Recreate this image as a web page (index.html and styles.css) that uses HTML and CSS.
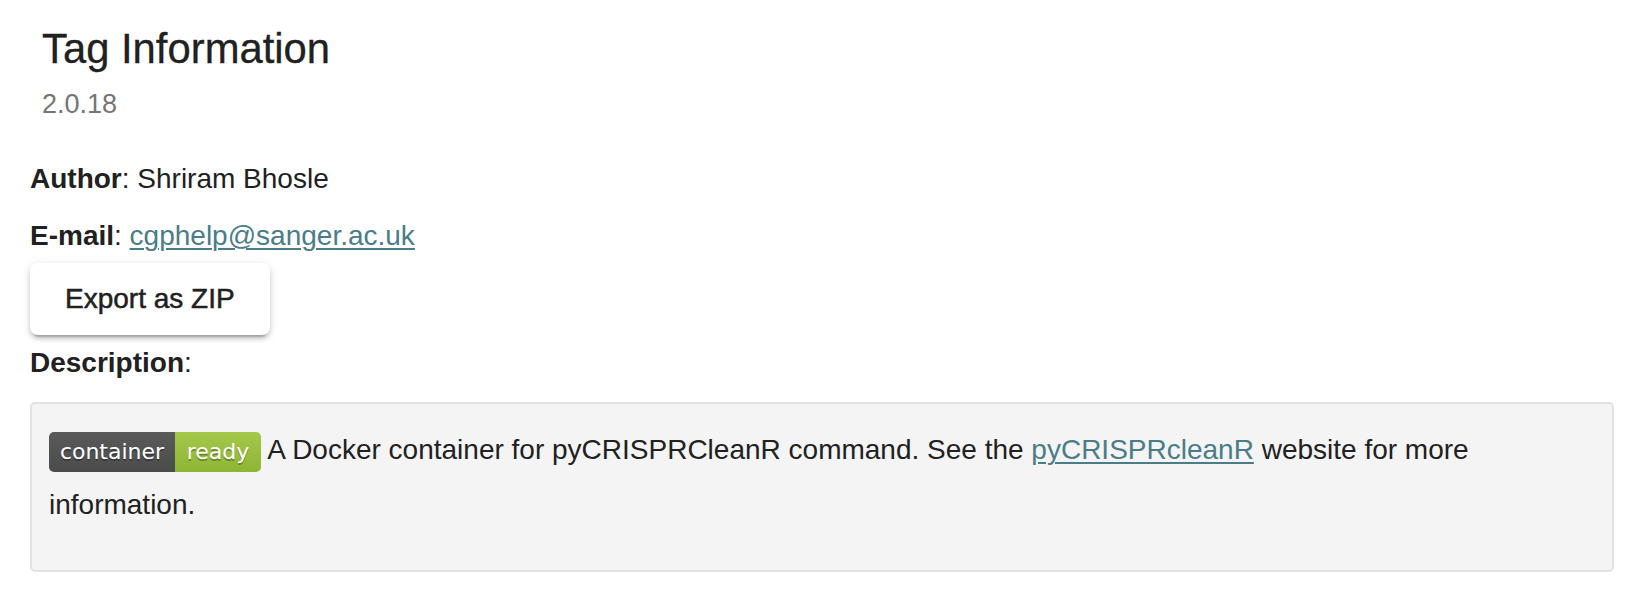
FILE: index.html
```html
<!DOCTYPE html>
<html>
<head>
<meta charset="utf-8">
<title>Tag Information</title>
<link rel="stylesheet" href="styles.css">
</head>
<body>
<div class="page">
  <div class="header">
    <h1 class="title">Tag Information</h1>
    <div class="version">2.0.18</div>
  </div>
  <p class="row row-author"><b>Author</b>: Shriram Bhosle</p>
  <p class="row row-email"><b>E-mail</b>: <a href="#" class="link">cgphelp@sanger.ac.uk</a></p>
  <button class="btn" type="button">Export as ZIP</button>
  <p class="row row-desc"><b>Description</b>:</p>
  <div class="well">
    <p class="desc"><span class="badge"><span class="badge-l">container</span><span class="badge-r">ready</span></span> A Docker container for pyCRISPRCleanR command. See the <a href="#" class="link">pyCRISPRcleanR</a> website for more information.</p>
  </div>
</div>
</body>
</html>
```

FILE: styles.css
```css
html, body {
  margin: 0;
  padding: 0;
  background: #ffffff;
}

body {
  font-family: "Liberation Sans", Arial, Helvetica, sans-serif;
  color: #212121;
}

.page {
  padding: 25px 26px 0 30px;
}

.header {
  padding-left: 12px;
}

.title {
  margin: 0;
  font-size: 41.8px;
  line-height: 48px;
  font-weight: 400;
  color: #212121;
  -webkit-text-stroke: 0.3px #212121;
}

.version {
  margin-top: 15px;
  font-size: 27px;
  line-height: 32px;
  color: #757575;
}

.row {
  margin: 0;
  font-size: 28px;
  line-height: 36px;
}

.row b {
  font-weight: 700;
}

.row-author {
  margin-top: 41px;
}

.row-email {
  margin-top: 21px;
}

.row-desc {
  margin-top: 10px;
}

.link {
  color: #4a7d87;
  text-decoration: underline;
  text-underline-offset: 3px;
  text-decoration-thickness: 2px;
}

.btn {
  display: block;
  margin-top: 9px;
  height: 72px;
  padding: 0 35px;
  border: none;
  border-radius: 8px;
  background: #ffffff;
  font-family: "Liberation Sans", Arial, Helvetica, sans-serif;
  font-size: 28px;
  line-height: 72px;
  color: #212121;
  -webkit-text-stroke: 0.5px #212121;
  box-shadow: 0 6px 2px -4px rgba(0, 0, 0, 0.2), 0 4px 4px 0 rgba(0, 0, 0, 0.14), 0 2px 10px 0 rgba(0, 0, 0, 0.12);
  cursor: pointer;
}

.well {
  margin-top: 21px;
  height: 170px;
  box-sizing: border-box;
  padding: 18px 17px 38px 17px;
  background: #f4f4f4;
  border: 2px solid #e2e2e2;
  border-radius: 5px;
}

.desc {
  margin: 0;
  font-size: 28px;
  line-height: 55px;
  color: #212121;
}

.badge {
  display: inline-flex;
  vertical-align: middle;
  height: 40px;
  border-radius: 5px;
  overflow: hidden;
  font-family: "DejaVu Sans", Verdana, sans-serif;
  font-size: 22px;
  line-height: 40px;
  color: #ffffff;
  text-shadow: 0 2px 0 rgba(1, 1, 1, 0.3);
}

.badge-l {
  width: 126px;
  text-align: center;
  background: linear-gradient(#5a5a5a, #4b4b4b);
}

.badge-r {
  width: 86px;
  text-align: center;
  background: linear-gradient(#a4c84a, #8fb535);
}
```
